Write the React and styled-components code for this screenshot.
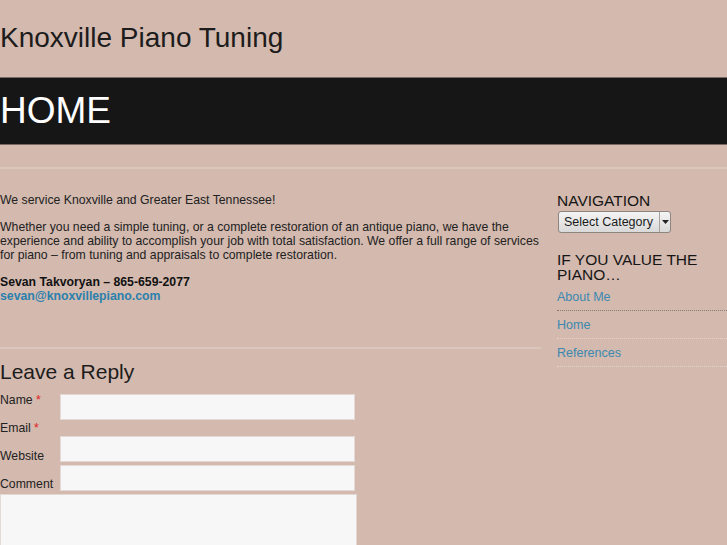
import React from "react";
import styled, { createGlobalStyle } from "styled-components";

const GlobalStyle = createGlobalStyle`
  html, body {
    margin: 0;
    padding: 0;
    background: #d3b9ae;
    font-family: "Liberation Sans", Arial, sans-serif;
    color: #222;
    overflow: hidden;
  }
`;

const links = [
  { label: "About Me", dark: true },
  { label: "Home" },
  { label: "References" }
];

export default () => {
  return (
    <Page>
      <GlobalStyle />
      <SiteTitle>Knoxville Piano Tuning</SiteTitle>
      <Band>
        <PageTitle>HOME</PageTitle>
      </Band>
      <Rule />
      <Columns>
        <Main>
          <Para>We service Knoxville and Greater East Tennessee!</Para>
          <Para>
            Whether you need a simple tuning, or a complete restoration of an
            antique piano, we have the experience and ability to accomplish
            your job with total satisfaction. We offer a full range of services
            for piano – from tuning and appraisals to complete restoration.
          </Para>
          <Para>
            <strong>Sevan Takvoryan – 865-659-2077</strong>
            <br />
            <Mail href="#">sevan@knoxvillepiano.com</Mail>
          </Para>
          <MainRule />
          <ReplyTitle>Leave a Reply</ReplyTitle>
          <Form>
            <Labels>
              <Label>
                Name <Req>*</Req>
              </Label>
              <Label>
                Email <Req>*</Req>
              </Label>
              <Label>Website</Label>
              <Label>Comment</Label>
            </Labels>
            <Inputs>
              <Input type="text" />
              <Input type="text" $gap={16} />
              <Input type="text" $gap={3} />
            </Inputs>
          </Form>
          <TextArea />
        </Main>
        <Sidebar>
          <WidgetTitle>NAVIGATION</WidgetTitle>
          <SelectBox>
            <SelectText>Select Category</SelectText>
            <SelectArrow>
              <svg width="7" height="4" viewBox="0 0 7 4">
                <path d="M0 0h7L3.5 4z" fill="#222" />
              </svg>
            </SelectArrow>
          </SelectBox>
          <WidgetTitle $top={19}>IF YOU VALUE THE PIANO…</WidgetTitle>
          <LinkList>
            {links.map((link, index) => (
              <LinkItem key={index} $dark={link.dark}>
                <SideLink href="#">{link.label}</SideLink>
              </LinkItem>
            ))}
          </LinkList>
        </Sidebar>
      </Columns>
    </Page>
  );
};

const Page = styled.div`
  width: 727px;
  height: 545px;
  overflow: hidden;
`;

const SiteTitle = styled.h1`
  margin: 0;
  padding: 23px 0 0;
  height: 77px;
  box-sizing: border-box;
  font-size: 28px;
  line-height: 30px;
  font-weight: normal;
  color: #1c1c1c;
`;

const Band = styled.div`
  height: 68px;
  background: #161616;
  border-top: 1px solid #7a6862;
  border-bottom: 1px solid #7a6862;
  box-sizing: border-box;
  display: flex;
  align-items: center;
`;

const PageTitle = styled.h2`
  margin: 0;
  font-size: 37px;
  font-weight: normal;
  color: #fff;
  line-height: 40px;
`;

const Rule = styled.div`
  margin-top: 22px;
  height: 2px;
  background: #dac6bd;
`;

const Columns = styled.div`
  display: flex;
  padding-top: 24px;
`;

const Main = styled.div`
  width: 541px;
  flex-shrink: 0;
`;

const Para = styled.p`
  margin: 0 0 13px;
  font-size: 12.25px;
  line-height: 14px;
  color: #222;
  strong {
    color: #111;
  }
`;

const Mail = styled.a`
  color: #2a80ad;
  font-weight: bold;
  text-decoration: none;
`;

const MainRule = styled.div`
  margin-top: 44px;
  height: 2px;
  background: #dac6bd;
`;

const ReplyTitle = styled.h3`
  margin: 10px 0 0;
  font-size: 21px;
  line-height: 26px;
  font-weight: normal;
  color: #1c1c1c;
`;

const Form = styled.div`
  display: flex;
  margin-top: 9px;
  height: 97px;
`;

const Labels = styled.div`
  width: 60px;
  display: flex;
  flex-direction: column;
`;

const Label = styled.label`
  font-size: 12.25px;
  line-height: 28px;
  height: 28px;
  flex-shrink: 0;
  color: #222;
  &:first-child {
    margin-top: -8px;
  }
`;

const Req = styled.span`
  color: #e02020;
`;

const Inputs = styled.div`
  display: flex;
  flex-direction: column;
`;

const Input = styled.input`
  width: 295px;
  height: 26px;
  box-sizing: border-box;
  margin: ${p => p.$gap || 0}px 0 0;
  background: #f7f7f7;
  border: 1px solid #e4dad5;
  padding: 3px;
`;

const TextArea = styled.textarea`
  display: block;
  width: 357px;
  height: 80px;
  box-sizing: border-box;
  margin-top: 3px;
  background: #f7f7f7;
  border: 1px solid #e4dad5;
  resize: none;
`;

const Sidebar = styled.div`
  margin-left: 16px;
  width: 170px;
  flex-shrink: 0;
`;

const WidgetTitle = styled.h4`
  margin: ${p => p.$top || 0}px 0 0;
  font-size: 15.5px;
  line-height: 15px;
  font-weight: normal;
  color: #151515;
`;

const SelectBox = styled.div`
  display: flex;
  width: 113px;
  height: 22px;
  margin: 3px 0 0 1px;
  box-sizing: border-box;
  border: 1px solid #8d8580;
  border-radius: 3px;
  background: linear-gradient(#f4f4f4, #d9d9d9);
  overflow: hidden;
`;

const SelectText = styled.div`
  flex: 1;
  font-size: 12.5px;
  line-height: 20px;
  padding-left: 5px;
  color: #1a1a1a;
  border-right: 1px solid #a9a29e;
`;

const SelectArrow = styled.div`
  width: 10px;
  display: flex;
  align-items: center;
  justify-content: center;
`;

const LinkList = styled.ul`
  list-style: none;
  margin: 7px 0 0;
  padding: 0;
`;

const LinkItem = styled.li`
  height: 28px;
  box-sizing: border-box;
  border-bottom: 1px dotted ${p => (p.$dark ? "#8a7b75" : "#e3d3cc")};
  display: flex;
  align-items: center;
  margin-top: ${p => (p.$dark ? -6 : 0)}px;
`;

const SideLink = styled.a`
  font-size: 12.5px;
  color: #3b88b0;
  text-decoration: none;
  margin-top: 1px;
`;
